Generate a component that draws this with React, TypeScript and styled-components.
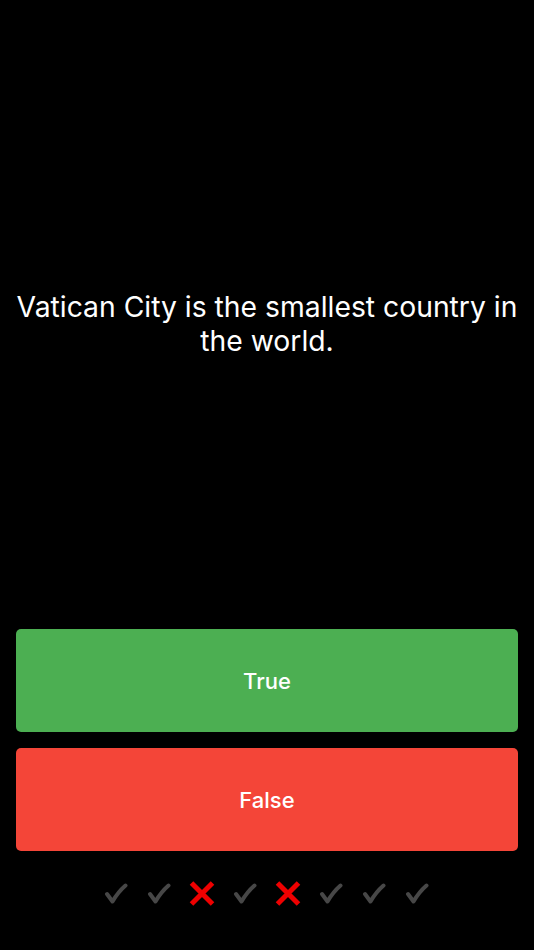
import styled, { createGlobalStyle } from "styled-components";

const GlobalStyle = createGlobalStyle`
  html, body {
    margin: 0;
    padding: 0;
    background: #000;
  }
  * {
    box-sizing: border-box;
  }
`;

const Screen = styled.div`
  display: flex;
  flex-direction: column;
  height: 950px;
  background: #000;
  font-family: Inter, "Noto Sans", sans-serif;
  color: #fff;
`;

const QuestionArea = styled.div`
  flex: 1;
  display: flex;
  align-items: center;
  justify-content: center;
  padding: 18px 12px 0;
`;

const QuestionText = styled.p`
  margin: 0;
  font-size: 28.3px;
  line-height: 34px;
  text-align: center;
  font-weight: 400;
`;

const Answers = styled.div`
  display: flex;
  flex-direction: column;
  gap: 16px;
  padding: 0 16px;
`;

const AnswerButton = styled.button<{ $tone: "true" | "false" }>`
  height: 103px;
  border: none;
  border-radius: 5px;
  background: ${(p) => (p.$tone === "true" ? "#4caf52" : "#f44538")};
  color: #fff;
  font-family: Inter, "Noto Sans", sans-serif;
  font-size: 22px;
  font-weight: 500;
  cursor: pointer;
`;

const ScoreRow = styled.div`
  display: flex;
  justify-content: center;
  gap: 15px;
  padding: 29px 2px 44px 0;
`;

const Mark = styled.span`
  display: flex;
  align-items: center;
  justify-content: center;
  width: 28px;
  height: 26px;
`;

const scores = [true, true, false, true, false, true, true, true];

function CheckMark() {
  return (
    <svg width="24" height="22" viewBox="0 0 24 22">
      <path
        d="M3 12 L8.5 19.5 Q14 10 21.5 3.5"
        fill="none"
        stroke="#474747"
        strokeWidth="4"
        strokeLinecap="round"
        strokeLinejoin="round"
      />
    </svg>
  );
}

function CrossMark() {
  return (
    <svg width="26" height="25" viewBox="0 0 26 25">
      <path d="M2.5 2 L23.5 23 M23.5 2 L2.5 23" stroke="#ee0000" strokeWidth="5" />
    </svg>
  );
}

export default function App() {
  return (
    <>
      <GlobalStyle />
      <Screen>
        <QuestionArea>
          <QuestionText>Vatican City is the smallest country in the world.</QuestionText>
        </QuestionArea>
        <Answers>
          <AnswerButton $tone="true">True</AnswerButton>
          <AnswerButton $tone="false">False</AnswerButton>
        </Answers>
        <ScoreRow>
          {scores.map((ok, i) => (
            <Mark key={i}>{ok ? <CheckMark /> : <CrossMark />}</Mark>
          ))}
        </ScoreRow>
      </Screen>
    </>
  );
}
